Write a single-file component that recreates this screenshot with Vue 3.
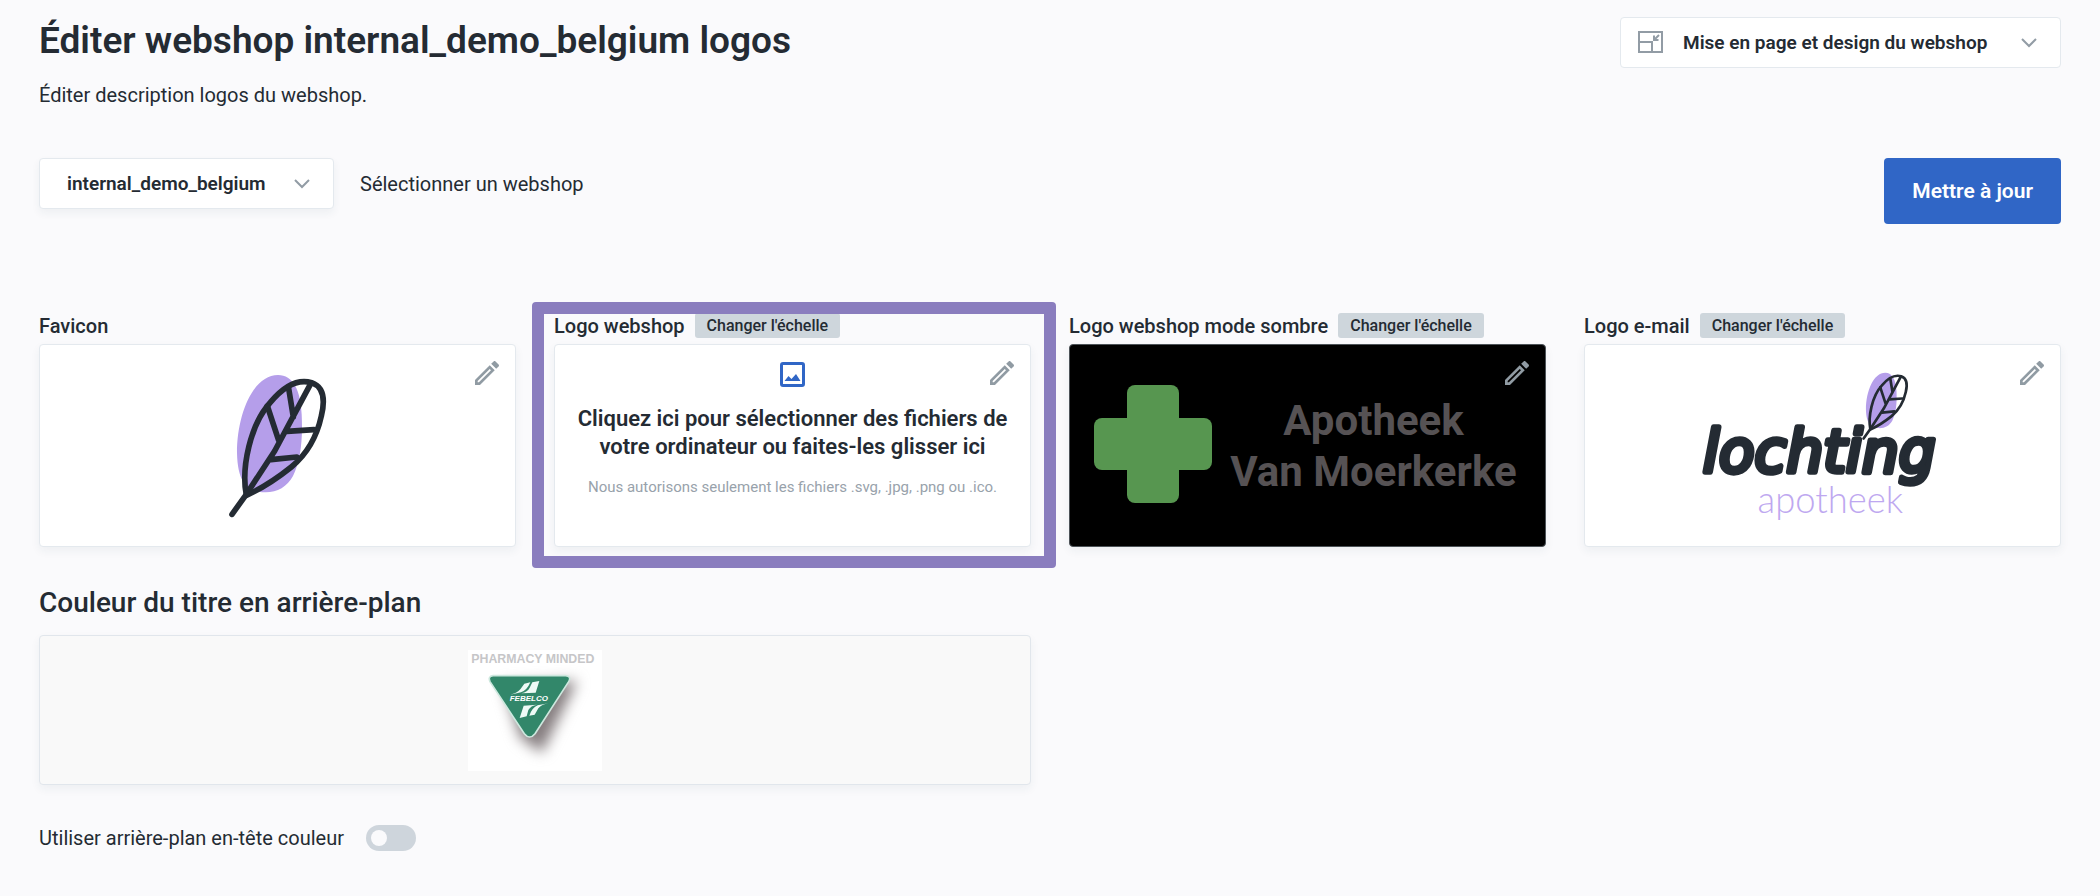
<template>
    <main class="page">
        <header class="page-header">
            <div class="heading">
                <h1>Éditer webshop internal_demo_belgium logos</h1>
                <p>Éditer description logos du webshop.</p>
            </div>
            <div class="select-box section-select">
                <svg class="select-icon" viewBox="0 0 25 22" aria-hidden="true">
                    <path d="M1 1h23v20H1zM1 11h13v10" />
                    <path d="M21 4l-5 5M16 4.500v4.500h4.500" />
                </svg>
                <select v-model="section" aria-label="Section">
                    <option>Mise en page et design du webshop</option>
                </select>
                <svg class="chevron" viewBox="0 0 16 10" aria-hidden="true"><path d="M1 1l7 7 7-7" /></svg>
            </div>
        </header>

        <div class="toolbar">
            <div class="shop-picker">
                <div class="select-box shop-select">
                    <select id="shop" v-model="shop">
                        <option>internal_demo_belgium</option>
                    </select>
                    <svg class="chevron" viewBox="0 0 16 10" aria-hidden="true"><path d="M1 1l7 7 7-7" /></svg>
                </div>
                <label for="shop">Sélectionner un webshop</label>
            </div>
            <button type="button" class="btn-update">Mettre à jour</button>
        </div>

        <section class="logos">
            <div v-for="logo in logos" :key="logo.id" class="logo" :class="{ highlighted: logo.highlighted }">
                <div class="logo-head">
                    <h2>{{ logo.title }}</h2>
                    <button v-if="logo.scalable" type="button" class="btn-scale">Changer l'échelle</button>
                </div>

                <div class="card" :class="{ dark: logo.id === 'dark' }">
                    <svg v-if="logo.id === 'favicon'" class="leaf-logo" viewBox="-5 0 420 510" role="img" aria-label="Favicon">
                        <g id="leaf">
                            <path class="leaf-fill" d="M205 42C250 42 273 88 276 160C280 240 272 300 250 345C232 378 202 395 165 394C125 392 84 380 82 275C82 160 130 42 205 42Z" />
                            <path class="leaf-line" d="M110 403C94 320 122 190 182 124C222 76 262 52 306 65C343 78 346 120 335 165C322 225 291 280 245 318C200 354 157 382 110 403Z" />
                            <path class="leaf-line" d="M67 460L110 400L195 270L302 70M237 82L251 168M173 135L207 238M313 206L232 211M262 288L184 296" />
                        </g>
                    </svg>

                    <label v-else-if="logo.id === 'webshop'" class="dropzone">
                        <input type="file" accept=".svg,.jpg,.png,.ico">
                        <svg class="image-icon" viewBox="0 0 25 25" aria-hidden="true">
                            <rect x="1.500" y="1.500" width="22" height="22" rx="1.500" />
                            <path d="M4.500 19l4-5 3 3 4.500-5 4.500 7z" />
                        </svg>
                        <strong>Cliquez ici pour sélectionner des fichiers de votre ordinateur ou faites-les glisser ici</strong>
                        <small>Nous autorisons seulement les fichiers .svg, .jpg, .png ou .ico.</small>
                    </label>

                    <div v-else-if="logo.id === 'dark'" class="pharmacy">
                        <svg viewBox="0 0 118 118" aria-hidden="true">
                            <rect x="33" width="52" height="118" rx="8" />
                            <rect y="33" width="118" height="52" rx="8" />
                        </svg>
                        <div class="pharmacy-name">Apotheek<br>Van Moerkerke</div>
                    </div>

                    <svg v-else class="mail-logo" viewBox="-6 0 800 504" role="img" aria-label="lochting apotheek">
                        <use href="#leaf" transform="translate(483 15) scale(.467)" />
                        <text class="light" x="200" y="450">apotheek</text>
                        <text class="script" x="38" y="330">lochting</text>
                    </svg>

                    <button type="button" class="btn-edit" :aria-label="`Modifier ${logo.title}`">
                        <svg viewBox="3 3 18 18" aria-hidden="true">
                            <path d="M14.060 9.020l.92.92L5.920 19H5v-.92l9.060-9.060M17.660 3c-.25 0-.51.1-.7.290l-1.830 1.830 3.750 3.750 1.830-1.830c.39-.39.39-1.020 0-1.410l-2.340-2.340c-.2-.2-.45-.29-.71-.29zm-3.600 3.190L3 17.250V21h3.750L17.810 9.940l-3.750-3.750z" />
                        </svg>
                    </button>
                </div>
            </div>
        </section>

        <section class="background">
            <h2>Couleur du titre en arrière-plan</h2>
            <div class="background-preview">
                <svg viewBox="83 57 402 363" role="img" aria-label="Pharmacy minded Febelco">
                    <rect x="83" y="57" width="402" height="363" fill="#fff" />
                    <text class="minded" x="93" y="95">PHARMACY MINDED</text>
                    <path class="triangle-shadow" d="M190 160L410 150L305 365L240 320Z" />
                    <path class="triangle" d="M158 134H376Q394 136 385 152L284 308Q268 328 252 308L149 152Q142 136 158 134Z" />
                    <path class="wings" d="M210 191Q228 188 240 175L252 158L270 154Q260 178 242 184ZM243 187Q262 183 268 170L276 154L297 150L286 185ZM324 217Q304 220 294 232L283 251L267 254Q276 229 292 223ZM290 221Q271 224 264 237L259 256L238 261L250 224Z" />
                    <text class="febelco" x="208" y="210">FEBELCO</text>
                </svg>
            </div>
            <label class="toggle">
                <span>Utiliser arrière-plan en-tête couleur</span>
                <input v-model="useHeaderBackground" type="checkbox" role="switch">
            </label>
        </section>
    </main>
</template>

<script setup>
    import { ref } from 'vue';

    const section = ref('Mise en page et design du webshop');
    const shop = ref('internal_demo_belgium');
    const useHeaderBackground = ref(false);

    const logos = [
        { id: 'favicon', title: 'Favicon' },
        { id: 'webshop', title: 'Logo webshop', scalable: true, highlighted: true },
        { id: 'dark', title: 'Logo webshop mode sombre', scalable: true },
        { id: 'email', title: 'Logo e-mail', scalable: true }
    ];
</script>

<style>
    body {
        background: #fafafc;
    }
</style>

<style scoped>
    .page {
        padding: 17px 39px 40px;
        color: #242b33;
        font-family: Roboto, "Liberation Sans", sans-serif;
        font-size: 20px;
        line-height: 28px;
    }

    .page * {
        box-sizing: border-box;
    }

    h1, h2, p {
        margin: 0;
    }

    button, select {
        font-family: inherit;
        color: inherit;
        cursor: pointer;
    }

    .page-header, .toolbar {
        display: flex;
        justify-content: space-between;
        align-items: flex-start;
    }

    h1 {
        font-size: 37px;
        line-height: 48px;
        font-weight: 600;
    }

    .heading p {
        margin-top: 16px;
    }

    .select-box {
        position: relative;
    }

        .select-box select {
            width: 100%;
            height: 51px;
            padding: 0 56px 0 27px;
            appearance: none;
            background: white;
            border: 1px solid #e4e9ee;
            border-radius: 4px;
            font-size: 19px;
            font-weight: 600;
        }

    .section-select {
        width: 441px;
    }

        .section-select select {
            padding-left: 62px;
        }

    .shop-select {
        width: 295px;
    }

        .shop-select select {
            box-shadow: 0 4px 8px rgba(40, 60, 90, 0.06);
        }

    .select-icon, .chevron {
        position: absolute;
        fill: none;
        stroke: #929ca5;
        stroke-width: 2;
        pointer-events: none;
    }

    .select-icon {
        left: 18px;
        top: 14px;
        width: 25px;
        height: 22px;
    }

    .chevron {
        right: 24px;
        top: 21px;
        width: 16px;
        height: 10px;
    }

    .toolbar {
        margin-top: 49px;
    }

    .shop-picker {
        display: flex;
        align-items: center;
        gap: 26px;
    }

    .btn-update {
        height: 66px;
        padding: 0 28px;
        background: #3066c6;
        border: none;
        border-radius: 4px;
        color: white;
        font-size: 21px;
        font-weight: 600;
    }

    .logos {
        display: grid;
        grid-template-columns: repeat(4, 1fr);
        gap: 38px;
        margin-top: 86px;
    }

    .logo {
        position: relative;
    }

        .logo.highlighted::after {
            content: "";
            position: absolute;
            inset: -8px -25px -21px -22px;
            border: 12px solid #8a7dbe;
            border-radius: 4px;
            pointer-events: none;
        }

    .logo-head {
        display: flex;
        align-items: center;
        gap: 10px;
        height: 34px;
        padding-bottom: 3px;
    }

        .logo-head h2 {
            font-size: 20px;
            line-height: 28px;
            font-weight: 500;
        }

    .btn-scale {
        height: 25px;
        padding: 0 12px;
        background: #ced6dc;
        border: none;
        border-radius: 3px;
        font-size: 16px;
        font-weight: 500;
    }

    .card {
        position: relative;
        display: flex;
        align-items: center;
        justify-content: center;
        height: 203px;
        background: white;
        border: 1px solid #e4e9ee;
        border-radius: 4px;
        box-shadow: 0 4px 10px rgba(40, 60, 90, 0.06);
    }

        .card.dark {
            background: black;
            border-color: #4d5358;
        }

    .leaf-logo {
        width: 140px;
        height: 170px;
    }

    .leaf-fill {
        fill: #b59eea;
    }

    .leaf-line {
        fill: none;
        stroke: #242b33;
        stroke-width: 17;
        stroke-linecap: round;
        stroke-linejoin: round;
    }

    .dropzone {
        display: flex;
        flex-direction: column;
        align-items: center;
        align-self: flex-start;
        padding: 17px 16px 0;
        text-align: center;
        cursor: pointer;
    }

        .dropzone input {
            position: absolute;
            opacity: 0;
            width: 1px;
            height: 1px;
        }

        .dropzone strong {
            margin-top: 18px;
            font-size: 22px;
            font-weight: 600;
        }

        .dropzone small {
            margin-top: 12px;
            color: #98a2ab;
            font-size: 15px;
        }

    .image-icon {
        width: 25px;
        height: 25px;
        fill: #3066c6;
    }

        .image-icon rect {
            fill: none;
            stroke: #3066c6;
            stroke-width: 3;
        }

    .pharmacy {
        display: flex;
        align-items: center;
        gap: 18px;
        padding: 0 4px 3px 0;
    }

        .pharmacy svg {
            width: 118px;
            height: 118px;
            fill: #579650;
        }

    .pharmacy-name {
        padding-top: 3px;
        color: #565254;
        font-size: 42px;
        line-height: 51px;
        font-weight: 700;
        text-align: center;
    }

    .mail-logo {
        width: 270px;
        height: 170px;
    }

    .script {
        fill: #242b33;
        stroke: #242b33;
        stroke-width: 16;
        stroke-linejoin: round;
        font-family: "DejaVu Sans", sans-serif;
        font-size: 172px;
        font-style: italic;
    }

    .light {
        fill: #bea8f0;
        font-family: Lato, sans-serif;
        font-size: 108px;
        font-weight: 300;
    }

    .btn-edit {
        position: absolute;
        top: 16px;
        right: 16px;
        padding: 0;
        background: none;
        border: none;
    }

        .btn-edit svg {
            display: block;
            width: 24px;
            height: 24px;
            fill: #909ba3;
        }

    .background {
        margin-top: 38px;
    }

        .background h2 {
            font-size: 28px;
            line-height: 36px;
            font-weight: 500;
        }

    .background-preview {
        display: flex;
        align-items: center;
        justify-content: center;
        width: calc(50% - 19px);
        height: 150px;
        margin-top: 14px;
        background: #f9f9f9;
        border: 1px solid #e1e6ec;
        border-radius: 4px;
        box-shadow: 0 4px 10px rgba(40, 60, 90, 0.06);
    }

        .background-preview svg {
            width: 134px;
            height: 121px;
        }

    .minded {
        fill: #c6c6c8;
        font-family: "Liberation Sans", sans-serif;
        font-size: 37px;
        font-weight: 700;
    }

    .triangle-shadow {
        fill: #857d7f;
        filter: blur(20px);
    }

    .triangle {
        fill: #32876a;
        stroke: #cde8de;
        stroke-width: 5;
    }

    .wings {
        fill: #eefaf6;
    }

    .febelco {
        fill: white;
        font-family: "Liberation Sans", sans-serif;
        font-size: 24px;
        font-weight: 700;
        font-style: italic;
    }

    .toggle {
        display: inline-flex;
        align-items: center;
        gap: 22px;
        margin-top: 39px;
        cursor: pointer;
    }

        .toggle input {
            display: flex;
            align-items: center;
            width: 50px;
            height: 26px;
            margin: 0;
            padding: 0 5px;
            appearance: none;
            background: #ced5dc;
            border-radius: 13px;
            cursor: pointer;
        }

            .toggle input::before {
                content: "";
                width: 16px;
                height: 16px;
                background: #fafafc;
                border-radius: 50%;
            }

            .toggle input:checked {
                justify-content: flex-end;
                background: #3066c6;
            }
</style>
